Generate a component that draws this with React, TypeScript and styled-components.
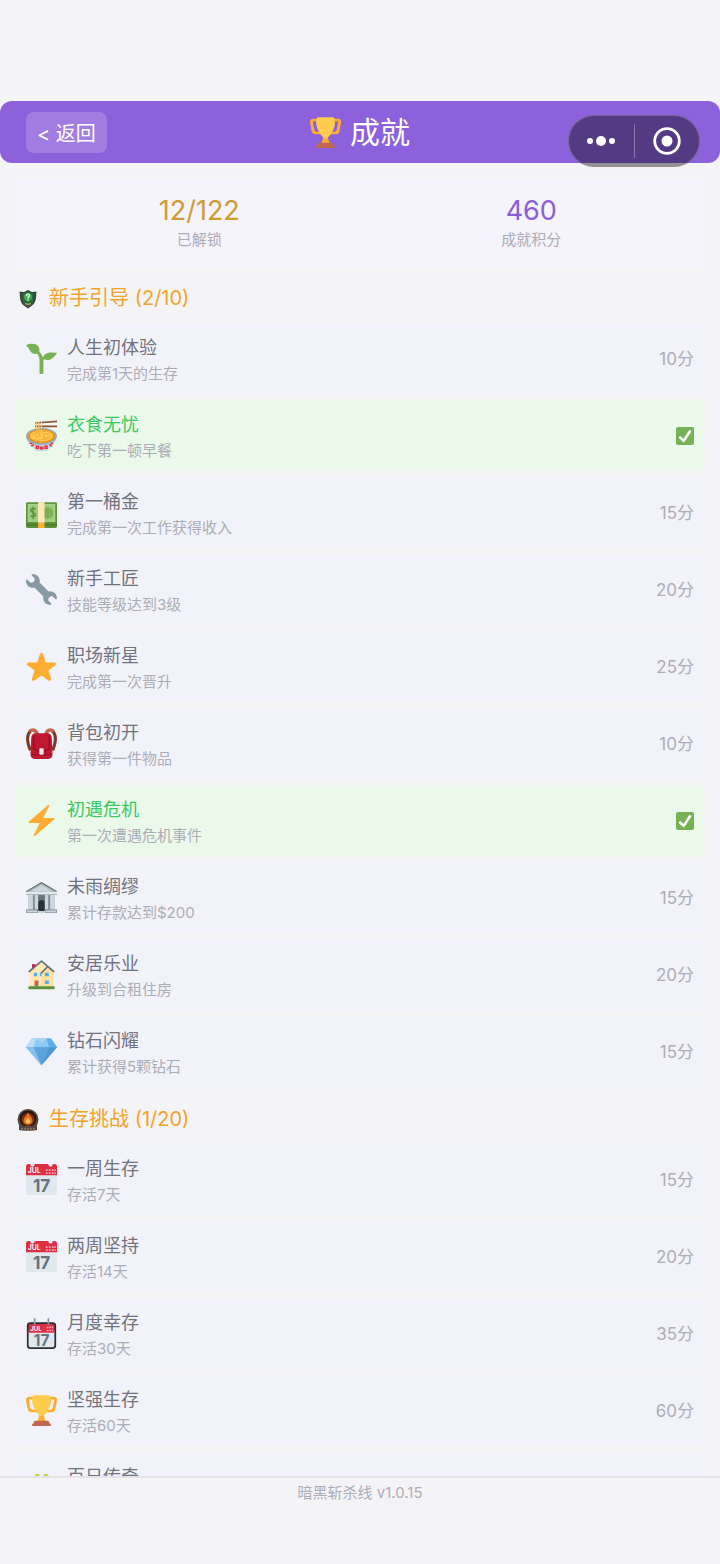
import React from "react";
import styled, {createGlobalStyle} from "styled-components";

interface IAchievement {
  id: string;
  icon: React.ReactNode;
  name: string;
  desc: string;
  points: number;
  done?: boolean;
}
interface IGroup {
  id: string;
  badge: React.ReactNode;
  title: string;
  unlocked: number;
  total: number;
  items: IAchievement[];
}

const Trophy = () => (
  <svg viewBox="0 0 36 36" aria-hidden="true">
    <path
      fill="#FFAC33"
      d="M5.123 5h6C12.227 5 13 4.896 13 6V4c0-1.104-.773-2-1.877-2h-8c-2 0-3.583 2.125-3 5 0 0 1.791 9.375 1.917 9.958C2.373 18.5 4.164 20 6.081 20h6.958c1.105 0-.039-1.896-.039-3v-2c0 1.104-.773 2-1.877 2h-4c-1.104 0-1.833-1.042-2-2S3.539 7.667 3.539 7.667C3.206 5.75 4.018 5 5.123 5zm25.812 0h-6C23.831 5 22 4.896 22 6V4c0-1.104 1.831-2 2.935-2h8c2 0 3.584 2.125 3 5 0 0-1.633 9.419-1.771 10-.354 1.5-2.042 3-4 3h-7.146C21.914 20 22 18.104 22 17v-2c0 1.104 1.831 2 2.935 2h4c1.104 0 1.834-1.042 2-2s1.584-7.333 1.584-7.333C32.851 5.75 32.04 5 30.935 5zM20.832 22c0-6.958-2.709 0-2.709 0s-3-6.958-3 0-3.291 10-3.291 10h12.292c-.001 0-3.292-3.042-3.292-10z"
    />
    <path
      fill="#FFCC4D"
      d="M29.123 6.577c0 6.775-6.77 18.192-11 18.192-4.231 0-11-11.417-11-18.192 0-5.195 1-6.319 3-6.319 1.374 0 6.025-.027 8-.027l7-.001c2.917-.001 4 .684 4 6.347z"
    />
    <path
      fill="#C1694F"
      d="M27 33c0 1.104.227 2-.877 2h-16C9.018 35 9 34.104 9 33v-1c0-1.104 1.164-2 2.206-2h13.917c1.042 0 1.877.896 1.877 2v1z"
    />
    <path
      fill="#C1694F"
      d="M29 34.625c0 .76.165 1.375-1.252 1.375H8.498C7.206 36 7 35.385 7 34.625v-.25C7 33.615 7.738 33 8.498 33h19.25c.759 0 1.252.615 1.252 1.375v.25z"
    />
  </svg>
);

const Seedling = () => (
  <svg viewBox="0 0 36 36" aria-hidden="true">
    <path
      fill="#77B255"
      d="M.3 2.200C4 .8 11.500-.6 14.500 4.200c1.100 1.800 1.300 4 .9 5.900 2 1.800 3.500 4.200 4.100 6.900.9-2.400 2.600-4.700 6-5.500 3.300-.8 6.800.2 9.600-.3.800-.1 1 .6.6 1.100-1.700 2.300-4.100 5.400-7.300 6.800-3 1.300-5.700.7-7.400-.6-.6 1-.8 2.200-.8 3.600V34.500c0 1-.9 1.500-2.200 1.500s-2.300-.5-2.300-1.500V20.500c0-3.300-1-6-2.700-7.900C9 13.400 6 11.500 4.200 8.200 3.200 6.400 2.400 4.500.5 3.400.1 3.100-.1 2.500.3 2.200z"
    />
  </svg>
);

const Noodles = () => (
  <svg viewBox="0 0 36 36" aria-hidden="true">
    <path fill="#CCD6DD" d="M1 20h34c0 6-3.500 10-8 12.500L25 36H11l-2-3.500C4.500 30 1 26 1 20z" />
    <ellipse cx="18" cy="19" rx="18" ry="10" fill="#99AAB5" />
    <ellipse cx="18" cy="18.800" rx="15.500" ry="8" fill="#F4900C" />
    <ellipse cx="18" cy="18.500" rx="13.500" ry="6.500" fill="#FFCC4D" />
    <g fill="none" stroke="#F4A93A" strokeWidth="1.300">
      <path d="M7 18c3-4 8-4 9-1s-5 4-6 1M18 22c6 2 11-1 10-4s-7-3-8 0 4 4 6 1M9 22c2 2 5 2 8 1M19 14c4-2 8-1 9 1" />
    </g>
    <g fill="none" stroke="#DD2E44" strokeWidth="1.600" strokeLinecap="round">
      <path d="M5 27l2 .5M6.500 30l2.500-1M12 30.500h2.500v2.500H12zM17 31.500h2.500v2H17zM22 30.500h2.500v2.500H22zM27.500 29l2 1M31 27l-2 1" />
    </g>
    <g fill="none" stroke="#F7B54A" strokeWidth="1.500">
      <path d="M12 2v15M15 2v15M18 2v14" />
    </g>
    <path fill="none" stroke="#8F5040" strokeWidth="2" d="M10.500 3.500L36 1.500M10.500 7.500L36 7.500" />
    <path fill="none" stroke="#FFDC8A" strokeWidth="1.200" d="M12 2v8M15 2v8M18 2v7" />
  </svg>
);

const Banknotes = () => (
  <svg viewBox="0 -3 36 36" aria-hidden="true">
    <path fill="#5C913B" d="M0 29h36v2c0 1-.8 2-2 2H2c-1.200 0-2-1-2-2z" />
    <path fill="#3E721D" d="M0 27h36v3H0z" />
    <rect y="3" width="36" height="26" rx="1.500" fill="#5C913B" />
    <rect x="2" y="5" width="32" height="21" fill="#A7D28B" />
    <rect x="3.500" y="6.500" width="29" height="18" fill="#9BCB7C" />
    <circle cx="25" cy="15.500" r="6.500" fill="#77B255" />
    <path
      fill="none"
      stroke="#5C913B"
      strokeWidth="1.600"
      d="M11 11.500C9.500 9.500 5.500 10 5.500 12.500c0 3.200 5.500 2 5.500 5 0 2.700-4 3-5.800 1M8.200 8v14.500"
    />
    <path fill="#FFE8B6" d="M14 3h7.500v24H14z" />
    <path fill="#FFAC33" d="M14 27h7.500v6H14z" />
  </svg>
);

const Wrench = () => (
  <svg viewBox="0 0 36 36" aria-hidden="true">
    <path
      fill="#8899A6"
      d="M27.989 19.977c-.622 0-1.225.078-1.806.213L15.811 9.818c.134-.581.212-1.184.212-1.806C16.023 3.587 12.436 0 8.012 0 7.110 0 5.910.916 6.909 1.915l2.997 2.998s.999 1.998-.999 3.995-3.996.998-3.996.998L1.915 6.909C.916 5.910 0 7.105 0 8.012c0 4.425 3.587 8.012 8.012 8.012.622 0 1.225-.078 1.806-.212l10.371 10.371c-.135.581-.213 1.184-.213 1.806 0 4.425 3.588 8.011 8.012 8.011.901 0 2.101-.916 1.102-1.915l-2.997-2.997s-.999-1.998.999-3.996 3.995-.999 3.995-.999l2.997 2.997c1 .999 1.916-.196 1.916-1.102 0-4.425-3.587-8.012-8.011-8.011z"
    />
  </svg>
);

const Star = () => (
  <svg viewBox="0 0 36 36" aria-hidden="true">
    <path
      fill="#FFAC33"
      d="M27.287 34.627c-.404 0-.806-.124-1.152-.371L18 28.422l-8.135 5.834c-.343.247-.746.371-1.148.371-.409 0-.817-.126-1.161-.38-.678-.494-.96-1.365-.71-2.160l3.095-9.621-8.010-5.640c-.676-.499-.957-1.372-.702-2.164.256-.797.986-1.339 1.822-1.354l9.955-.014L16.130 3.680C16.401 2.883 17.156 2.345 18 2.345c.844 0 1.597.538 1.870 1.335l3.109 9.613 9.970.014c.836.015 1.566.557 1.822 1.354.255.792-.026 1.665-.702 2.164l-8.010 5.640 3.095 9.621c.25.795-.032 1.666-.71 2.160-.344.254-.752.381-1.157.381z"
    />
  </svg>
);

const Backpack = () => (
  <svg viewBox="0 0 36 36" aria-hidden="true">
    <path fill="none" stroke="#7C3B2A" strokeWidth="3.600" d="M6 3C1 7 1 16 5 26M30 3c5 4 5 13 1 23" />
    <path fill="none" stroke="#C1694F" strokeWidth="4" d="M4 4C7 1.500 12 1.500 13 8M32 4c-3-2.500-8-2.500-9 4" />
    <path
      fill="#BE1931"
      d="M11 6h14c3 0 4.500 2 4.800 5l1 19c.200 4-2 6-5 6H10.200c-3 0-5.200-2-5-6l1-19C6.500 8 8 6 11 6z"
    />
    <path fill="none" stroke="#A0041E" strokeWidth="1.300" d="M9 9v15l4 2.500h10l4-2.500V9M6.500 31h23" />
    <rect x="15.500" y="23.500" width="5" height="7.500" rx="1" fill="#E1E8ED" />
  </svg>
);

const Bolt = () => (
  <svg viewBox="0 0 36 36" aria-hidden="true">
    <path
      fill="#FFAC33"
      d="M32.938 15.651C32.792 15.260 32.418 15 32 15H19.925L26.890 1.458c.219-.426.106-.947-.271-1.243C26.437.071 26.218 0 26 0c-.233 0-.466.082-.653.243L18 6.588 3.347 19.243c-.316.273-.43.714-.284 1.105S3.582 21 4 21h12.075L9.110 34.542c-.219.426-.106.947.271 1.243.182.144.401.215.619.215.233 0 .466-.082.653-.243L18 29.412l14.653-12.655c.317-.273.43-.714.285-1.106z"
    />
  </svg>
);

const Bank = () => (
  <svg viewBox="0 0 36 36" aria-hidden="true">
    <path fill="#8899A6" d="M3 14h30v19H3z" />
    <path fill="#66757F" d="M9 15h18v18H9z" />
    <path fill="#AAB8C2" d="M18 0L0 11v4h36v-4z" />
    <path fill="#CCD6DD" d="M18 3.500L5.500 11h25z" />
    <path fill="none" stroke="#66757F" strokeWidth="1.300" d="M.5 11L18 .8 35.500 11" />
    <path fill="#E1E8ED" d="M0 11.500h36v2.500H0z" />
    <path fill="#CCD6DD" d="M3 15h5v17H3zM10 15h4v17h-4zM22 15h4v17h-4zM28 15h5v17h-5z" />
    <path fill="#292F33" d="M14.500 24c0-4 7-4 7 0v10h-7z" />
    <path fill="#8899A6" d="M0 32h14v4H0zM22 32h14v4H22z" />
    <path fill="#CCD6DD" d="M1 33h12v2H1zM23 33h12v2H23zM14 34h8v2h-8z" />
  </svg>
);

const House = () => (
  <svg viewBox="0 0 36 36" aria-hidden="true">
    <path fill="#BE1931" d="M7 6h4v9H7z" />
    <path fill="#FFE8B6" d="M4 14L18 2l14 12v18H4z" />
    <path fill="#FFD983" d="M18 16l7-6.500 7 5V32H18z" opacity=".45" />
    <path
      fill="none"
      stroke="#66757F"
      strokeWidth="2"
      strokeLinecap="round"
      strokeLinejoin="round"
      d="M3.800 14.500L18 2.500l14.200 12M18 16l7-7"
    />
    <path fill="#55ACEE" d="M9 16h4v4H9zM22 16h4.500v4H22zM22 25h4.500v4H22zM16 16h2v4h-2z" />
    <path fill="#C1694F" d="M10 25h4.500v7H10z" />
    <path fill="#5C913B" d="M4 31.500h28c1 0 1.500 1 1.500 1.800S33 35 32 35H4c-1 0-1.500-.8-1.500-1.700S3 31.500 4 31.500z" />
  </svg>
);

const Gem = () => (
  <svg viewBox="0 0 36 36" aria-hidden="true">
    <path fill="#6FB6EF" d="M7 3h22l7 10-18 21L0 13z" />
    <path fill="#BDDDF4" d="M7 3h5l-3 10H0z" />
    <path fill="#8CCAF7" d="M12 3h12l3 10H9z" />
    <path fill="#A8D6F5" d="M12 3h12l-6 5z" />
    <path fill="#5DADEC" d="M24 3h5l7 10h-9z" />
    <path fill="#83BFEF" d="M0 13h9l9 21z" />
    <path fill="#5DA3DC" d="M9 13h18l-9 21z" />
    <path fill="#4B97D2" d="M36 13h-9l-9 21z" />
  </svg>
);

const Calendar = () => (
  <svg viewBox="0 0 36 36" aria-hidden="true">
    <path fill="#E1E8ED" d="M0 10h36v23c0 2-1.500 3-3 3H3c-1.500 0-3-1-3-3z" />
    <path
      fill="#DD2E44"
      d="M0 13V3C0 1 1 0 3 0h2c0 4 5 4 5 0h16c0 4 5 4 5 0h2c2 0 3 1 3 3v10z"
    />
    <CalendarText x="2" y="11" size={8} ink="#F5F8FA">JUL</CalendarText>
    <g fill="#F4ABBA">
      <path d="M23 6h2v2h-2zM26.500 6h2v2h-2zM30 6h2v2h-2zM33 6h1.500v2H33zM23 9.500h2v2h-2zM26.500 9.500h2v2h-2zM30 9.500h2v2h-2zM33 9.500h1.500v2H33z" />
    </g>
    <CalendarText x="8" y="32" size={20} ink="#66757F">17</CalendarText>
  </svg>
);

const TearOff = () => (
  <svg viewBox="0 0 36 36" aria-hidden="true">
    <rect x="1" y="5" width="34" height="31" rx="4" fill="#292F33" />
    <path fill="#E1E8ED" d="M3 15h30v16c0 2-1 3-3 3H6c-2 0-3-1-3-3z" />
    <path fill="#DD2E44" d="M3 17V9c0-1.500 1-2 2-2h26c1 0 2 .5 2 2v8z" />
    <CalendarText x="5" y="15" size={7} ink="#F5F8FA">JUL</CalendarText>
    <path fill="#F4ABBA" d="M24 10h2v2h-2zM27 10h2v2h-2zM30 10h1.500v2H30zM24 13.500h2v2h-2zM27 13.500h2v2h-2zM30 13.500h1.500v2H30z" />
    <path fill="none" stroke="#8899A6" strokeWidth="2" strokeLinecap="round" d="M10 1v6M26 1v6" />
    <CalendarText x="9" y="32" size={18} ink="#66757F">17</CalendarText>
  </svg>
);

const Dragon = () => (
  <svg viewBox="0 0 36 36" aria-hidden="true">
    <path fill="#C6D04A" d="M10 6c0-2.500 1.500-4 3.500-4S16 3.500 16 5v4h-6zM20 5c0-1.500 1-3 3-3s3.500 1.500 3.500 4v3H20z" />
    <path fill="#77B255" d="M7 9c4-4 18-4 22 0s4 15 0 21-18 6-22 0-4-17 0-21z" />
    <circle cx="12" cy="17" r="2.500" fill="#292F33" />
    <circle cx="24" cy="17" r="2.500" fill="#292F33" />
  </svg>
);

const ShieldBadge = () => (
  <svg viewBox="0 0 24 24" aria-hidden="true">
    <path fill="#3C4A41" d="M12 3l4 2 4.500-.5L20 11c-.5 4.500-2.500 6.500-4.500 8L12 21.500 8.500 19C6.500 17.500 4.500 15.500 4 11l-.5-6.500L8 5z" />
    <path fill="#1E6B35" d="M12 4.500l5 1.800.5 4.200c0 4-2 6-5.500 8-3.500-2-5.500-4-5.500-8L7 6.300z" />
    <circle cx="12" cy="10" r="4.200" fill="#3FA257" />
    <path
      fill="none"
      stroke="#D5F5C8"
      strokeWidth="1.500"
      strokeLinecap="round"
      d="M10.500 8.600c.2-1.800 3.100-1.700 3 0 0 1.200-1.500 1.200-1.500 2.400M12 13v.2"
    />
    <path fill="none" stroke="#A79B5D" strokeWidth="1.400" d="M9 16.500l3 1 3-1" />
  </svg>
);

const CampfireBadge = () => (
  <svg viewBox="0 0 24 24" aria-hidden="true">
    <circle cx="12" cy="11.500" r="10.500" fill="#5A4A43" />
    <circle cx="12" cy="11" r="8.500" fill="#2B1712" />
    <circle cx="12" cy="11.500" r="6.500" fill="#7A3212" />
    <path fill="#E8701A" d="M12 4c.5 3 4.500 4.500 4.500 8.500 0 2.500-2 4-4.500 4s-4.500-1.500-4.500-4C7.500 9 11.500 7.500 12 4z" />
    <path fill="#FFC45A" d="M12 9c.3 1.800 2.300 2.500 2.300 4.300 0 1.500-1 2.200-2.300 2.200s-2.300-.7-2.300-2.200C9.700 11.500 11.700 10.800 12 9z" />
    <path fill="#57473F" d="M3 16.500l5 1.500h8l5-1.500V22l-5 .8H8L3 22z" />
    <path fill="none" stroke="#8C7B6C" strokeWidth="1.400" strokeDasharray="2 1" d="M5 20.500l4 .5h6l4-.5" />
  </svg>
);

const Check = () => (
  <CheckIcon viewBox="0 0 36 36" role="img" aria-label="已解锁">
    <path
      fill="#77B255"
      d="M36 32c0 2.209-1.791 4-4 4H4c-2.209 0-4-1.791-4-4V4c0-2.209 1.791-4 4-4h28c2.209 0 4 1.791 4 4v28z"
    />
    <path
      fill="#FFF"
      d="M29.280 6.362c-1.156-.751-2.704-.422-3.458.736L14.936 23.877l-5.029-4.650c-1.014-.938-2.596-.875-3.533.138-.937 1.014-.875 2.596.139 3.533l7.209 6.666c.48.445 1.090.665 1.696.665.673 0 1.534-.282 2.099-1.139.332-.506 12.500-19.270 12.500-19.270.751-1.159.421-2.707-.737-3.458z"
    />
  </CheckIcon>
);

const groups: IGroup[] = [
  {
    id: "guide",
    badge: <ShieldBadge />,
    title: "新手引导",
    unlocked: 2,
    total: 10,
    items: [
      {id: "g1", icon: <Seedling />, name: "人生初体验", desc: "完成第1天的生存", points: 10},
      {id: "g2", icon: <Noodles />, name: "衣食无忧", desc: "吃下第一顿早餐", points: 10, done: true},
      {id: "g3", icon: <Banknotes />, name: "第一桶金", desc: "完成第一次工作获得收入", points: 15},
      {id: "g4", icon: <Wrench />, name: "新手工匠", desc: "技能等级达到3级", points: 20},
      {id: "g5", icon: <Star />, name: "职场新星", desc: "完成第一次晋升", points: 25},
      {id: "g6", icon: <Backpack />, name: "背包初开", desc: "获得第一件物品", points: 10},
      {id: "g7", icon: <Bolt />, name: "初遇危机", desc: "第一次遭遇危机事件", points: 15, done: true},
      {id: "g8", icon: <Bank />, name: "未雨绸缪", desc: "累计存款达到$200", points: 15},
      {id: "g9", icon: <House />, name: "安居乐业", desc: "升级到合租住房", points: 20},
      {id: "g10", icon: <Gem />, name: "钻石闪耀", desc: "累计获得5颗钻石", points: 15},
    ],
  },
  {
    id: "survival",
    badge: <CampfireBadge />,
    title: "生存挑战",
    unlocked: 1,
    total: 20,
    items: [
      {id: "s1", icon: <Calendar />, name: "一周生存", desc: "存活7天", points: 15},
      {id: "s2", icon: <Calendar />, name: "两周坚持", desc: "存活14天", points: 20},
      {id: "s3", icon: <TearOff />, name: "月度幸存", desc: "存活30天", points: 35},
      {id: "s4", icon: <Trophy />, name: "坚强生存", desc: "存活60天", points: 60},
      {id: "s5", icon: <Dragon />, name: "百日传奇", desc: "存活100天", points: 100},
    ],
  },
];

function App() {
  return (
    <Page>
      <GlobalStyle />
      <Header>
        <BackButton type="button">&lt; 返回</BackButton>
        <Title>
          <TitleIcon>
            <Trophy />
          </TitleIcon>
          成就
        </Title>
        <Capsule>
          <CapsuleButton type="button" aria-label="更多">
            <svg width="30" height="12" viewBox="0 0 30 12" fill="#fff">
              <circle cx="4" cy="6" r="3" />
              <circle cx="15" cy="6" r="5" />
              <circle cx="26" cy="6" r="3" />
            </svg>
          </CapsuleButton>
          <Divider />
          <CapsuleButton type="button" aria-label="关闭">
            <svg width="28" height="28" viewBox="0 0 28 28">
              <circle cx="14" cy="14" r="12.300" fill="none" stroke="#fff" strokeWidth="2.800" />
              <circle cx="14" cy="14" r="5.500" fill="#fff" />
            </svg>
          </CapsuleButton>
        </Capsule>
      </Header>
      <Content>
        <Stats>
          <Stat>
            <StatValue $color="#cf9c33">12/122</StatValue>
            <StatLabel>已解锁</StatLabel>
          </Stat>
          <Stat>
            <StatValue $color="#8a5fd6">460</StatValue>
            <StatLabel>成就积分</StatLabel>
          </Stat>
        </Stats>
        {groups.map((group) => (
          <section key={group.id}>
            <GroupTitle>
              <Badge>{group.badge}</Badge>
              {group.title} ({group.unlocked}/{group.total})
            </GroupTitle>
            <List>
              {group.items.map((item) => (
                <Row key={item.id} $done={item.done}>
                  <RowIcon>{item.icon}</RowIcon>
                  <RowBody>
                    <RowName $done={item.done}>{item.name}</RowName>
                    <RowDesc>{item.desc}</RowDesc>
                  </RowBody>
                  {item.done ? <Check /> : <Points>{item.points}分</Points>}
                </Row>
              ))}
            </List>
          </section>
        ))}
      </Content>
      <Footer>暗黑斩杀线 v1.0.15</Footer>
    </Page>
  );
}

const GlobalStyle = createGlobalStyle`
  * {
    box-sizing: border-box;
  }
  body {
    margin: 0;
    background-color: #f4f4f7;
    font-family: Inter, "Noto Sans CJK SC", sans-serif;
  }
  h1, h2, p, ul {
    margin: 0;
    padding: 0;
    font-weight: 400;
  }
  svg {
    display: block;
  }
`;
const Page = styled.div`
  display: flex;
  flex-direction: column;
  height: 100vh;
  padding-top: 101px;
`;
const Header = styled.header`
  position: relative;
  flex-shrink: 0;
  display: grid;
  grid-template-columns: 1fr auto 1fr;
  align-items: center;
  height: 62px;
  padding: 0 26px;
  border-radius: 12px;
  background-color: #8d61db;
  color: white;
`;
const BackButton = styled.button`
  justify-self: start;
  height: 41px;
  padding: 0 11px;
  border: none;
  border-radius: 8px;
  background-color: rgba(255, 255, 255, 0.18);
  color: white;
  font-family: inherit;
  font-size: 20px;
  cursor: pointer;
`;
const Title = styled.h1`
  display: flex;
  align-items: center;
  gap: 9px;
  font-size: 30px;
  line-height: 40px;
`;
const TitleIcon = styled.span`
  width: 31px;
`;
/* floats over the header and the page below it */
const Capsule = styled.div`
  position: absolute;
  top: 14px;
  right: 20px;
  display: flex;
  align-items: center;
  width: 132px;
  height: 52px;
  border: 1px solid rgba(150, 140, 160, 0.5);
  border-radius: 26px;
  background-color: rgba(0, 0, 0, 0.4);
`;
const CapsuleButton = styled.button`
  flex: 1;
  display: flex;
  align-items: center;
  justify-content: center;
  padding: 0;
  border: none;
  background: none;
  cursor: pointer;
`;
const Divider = styled.span`
  width: 1px;
  height: 34px;
  background-color: rgba(255, 255, 255, 0.3);
`;
const Content = styled.main`
  flex: 1;
  min-height: 0;
  padding: 16px 16px 0;
  overflow-y: auto;
  scrollbar-width: none;
`;
const Stats = styled.div`
  display: flex;
  justify-content: space-around;
  padding: 15px 12px;
  background-color: #f5f3fb;
`;
const Stat = styled.div`
  text-align: center;
`;
const StatValue = styled.p<{$color: string}>`
  color: ${(props) => props.$color};
  font-size: 27px;
  line-height: 34px;
`;
const StatLabel = styled.p`
  color: #adacb6;
  font-size: 15px;
  line-height: 23px;
`;
const GroupTitle = styled.h2`
  display: flex;
  align-items: center;
  gap: 9px;
  margin: 17px 0 9px;
  color: #f3a32b;
  font-size: 20px;
  line-height: 31px;
`;
const Badge = styled.span`
  width: 24px;
`;
const List = styled.ul`
  display: flex;
  flex-direction: column;
  gap: 6px;
  list-style: none;
`;
const Row = styled.li<{$done?: boolean}>`
  display: flex;
  align-items: center;
  gap: 10px;
  padding: 7px 10px;
  background-color: ${(props) => (props.$done ? "#eaf9ea" : "#f2f3fa")};
`;
const RowIcon = styled.span`
  flex-shrink: 0;
  width: 31px;
`;
const RowBody = styled.div`
  flex: 1;
  padding-top: 5px;
`;
const RowName = styled.p<{$done?: boolean}>`
  color: ${(props) => (props.$done ? "#3cc864" : "#73737e")};
  font-size: 18px;
  line-height: 26px;
`;
const RowDesc = styled.p`
  color: #adadb7;
  font-size: 15px;
  line-height: 26px;
`;
const Points = styled.span`
  color: #adadb7;
  font-size: 17px;
  line-height: 26px;
`;
const CheckIcon = styled.svg`
  flex-shrink: 0;
  width: 18px;
`;
const CalendarText = styled.text<{size: number; ink: string}>`
  fill: ${(props) => props.ink};
  font-family: Inter, sans-serif;
  font-size: ${(props) => props.size}px;
  font-weight: 700;
`;
const Footer = styled.footer`
  flex-shrink: 0;
  padding-bottom: 56px;
  border-top: 2px solid #e4e3e9;
  color: #adadb7;
  font-size: 15px;
  line-height: 30px;
  text-align: center;
`;

export default App;
